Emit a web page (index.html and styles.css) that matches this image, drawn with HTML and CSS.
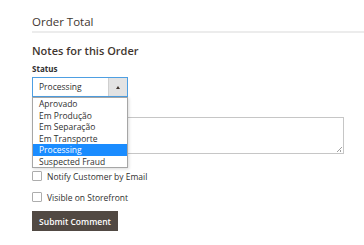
FILE: index.html
```html
<!DOCTYPE html>
<html>
<head>
    <meta charset="UTF-8">
    <meta name="viewport" content="width=device-width, initial-scale=1.0">
    <title>Order Comments</title>
    <link rel="stylesheet" href="styles.css">
</head>
<body>
    <div class="page">
        <div class="section-title">Order Total</div>

        <h2 class="notes-title">Notes for this Order</h2>

        <div class="field">
            <label class="field-label">Status</label>
            <div class="select-wrap">
                <div class="select">
                    <span class="select-value">Processing</span>
                    <span class="select-arrow"></span>
                </div>
                <ul class="select-menu">
                    <li>Aprovado</li>
                    <li>Em Produção</li>
                    <li>Em Separação</li>
                    <li>Em Transporte</li>
                    <li class="active">Processing</li>
                    <li>Suspected Fraud</li>
                </ul>
            </div>
        </div>

        <!-- comment label sits under the open menu, so only the box is shown -->
        <div class="field comment-field">
            <div class="textarea"><span class="resize"></span></div>
        </div>

        <div class="checks">
            <label class="check"><span class="box"></span>Notify Customer by Email</label>
            <label class="check"><span class="box"></span>Visible on Storefront</label>
        </div>

        <button type="button" class="btn-submit">Submit Comment</button>
    </div>
</body>
</html>
```

FILE: styles.css
```css
body {
    margin: 0;
    background-color: #fff;
    font-family: "Open Sans", "Liberation Sans", sans-serif;
    color: #303030;
}
.page {
    padding: 13px 20px 0 32px;
}
.section-title {
    font-size: 11.5px;
    line-height: 18px;
    color: #41362f;
    border-bottom: 2px solid #ececec;
    margin-right: -20px;
}
.notes-title {
    margin: 10px 0 0;
    font-size: 11px;
    line-height: 15px;
    font-weight: 600;
    color: #41362f;
}
.field-label {
    display: block;
    margin-top: 4.5px;
    margin-bottom: 3.5px;
    font-size: 8px;
    line-height: 11px;
    font-weight: 700;
    color: #303030;
}
.comment-field {
    padding-top: 20px;
}
.select-wrap {
    position: relative;
    width: 96px;
}
.select {
    display: flex;
    height: 20px;
    box-sizing: border-box;
    border: 1px solid #4e9fe2;
    background-color: #fff;
}
.select-value {
    flex: 1;
    padding-left: 6px;
    font-size: 8.5px;
    line-height: 18px;
}
.select-arrow {
    width: 18px;
    background-color: #e3e3e3;
    border-left: 1px solid #cfcfcf;
    position: relative;
}
.select-arrow::after {
    content: "";
    position: absolute;
    left: 7px;
    top: 8px;
    border-left: 2.5px solid transparent;
    border-right: 2.5px solid transparent;
    border-bottom: 3px solid #41362f;
}
.select-menu {
    position: absolute;
    top: 20px;
    left: 0;
    width: 96px;
    box-sizing: border-box;
    margin: 0;
    padding: 0;
    list-style: none;
    background-color: #fff;
    border: 1px solid #a6a6a6;
    box-shadow: 1px 1px 3px rgba(0,0,0,0.15);
    z-index: 2;
}
.select-menu li {
    height: 11.5px;
    line-height: 11.5px;
    padding-left: 6px;
    font-size: 8.5px;
    color: #303030;
}
.select-menu li.active {
    background-color: #1a8cff;
    color: #fff;
}
.textarea {
    position: relative;
    height: 37px;
    box-sizing: border-box;
    border: 1px solid #c6c6c6;
}
.resize {
    position: absolute;
    right: 1px;
    bottom: 1px;
    width: 5px;
    height: 5px;
    background: linear-gradient(135deg, transparent 45%, #a0a0a0 45%, #a0a0a0 55%, transparent 55%, transparent 70%, #a0a0a0 70%, #a0a0a0 80%, transparent 80%);
}
.checks {
    margin-top: 17px;
    display: flex;
    flex-direction: column;
    gap: 11px;
}
.check {
    display: flex;
    align-items: center;
    gap: 5px;
    height: 10px;
    font-size: 8.5px;
    color: #303030;
}
.box {
    width: 10px;
    height: 10px;
    box-sizing: border-box;
    border: 1px solid #adadad;
    border-radius: 1px;
    background-color: #fff;
}
.btn-submit {
    display: block;
    margin-top: 9px;
    width: 86px;
    height: 20px;
    padding: 0;
    border: none;
    background-color: #514943;
    color: #fff;
    font-family: "Open Sans", "Liberation Sans", sans-serif;
    font-size: 8.5px;
    font-weight: 600;
}
```
